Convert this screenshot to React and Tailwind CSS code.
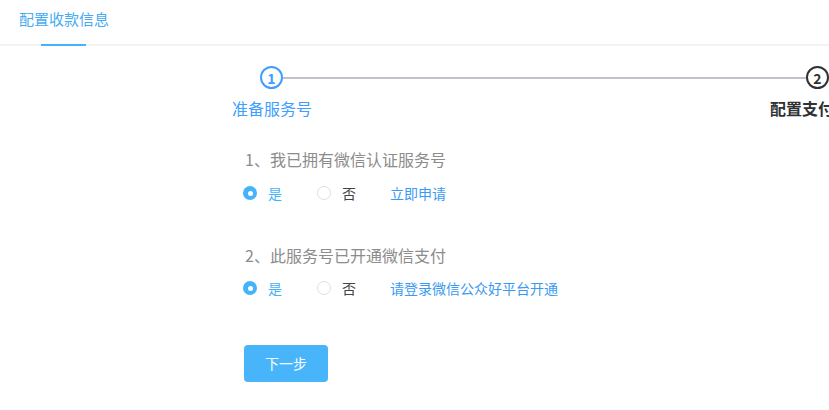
import React from "react";

const FONT = { fontFamily: '"Noto Sans CJK SC", "Noto Sans", sans-serif' };

function Radio({ checked, label, className }) {
  return (
    <div className={"flex items-center " + className}>
      {checked ? (
        <span className="flex h-[14px] w-[14px] items-center justify-center rounded-full bg-[#45b3fa]">
          <span className="h-[5px] w-[5px] rounded-full bg-white" />
        </span>
      ) : (
        <span className="h-[14px] w-[14px] rounded-full border border-[#dcdfe6] bg-white" />
      )}
      <span
        className={
          "ml-[11px] text-[14px] leading-[20px] " +
          (checked ? "text-[#45b3fa]" : "text-[#444]")
        }
      >
        {label}
      </span>
    </div>
  );
}

function Question({ title, link, first }) {
  return (
    <div className={first ? "mt-[27px]" : "mt-[40px]"}>
      <div className="ml-[2px] text-[16px] leading-[24px] text-[#8c8c8c]">{title}</div>
      <div className={"flex items-center " + (first ? "mt-[12px]" : "mt-[11px]")}>
        <Radio checked label="是" className="w-[74px]" />
        <Radio label="否" className="w-[73px]" />
        <span className="text-[14px] leading-[20px] text-[#3a9af2]">{link}</span>
      </div>
    </div>
  );
}

export default function App() {
  return (
    <div className="h-[410px] w-[829px] overflow-hidden bg-white" style={FONT}>
      <div className="relative h-[46px] border-b-2 border-[#f3f3f5]">
        <div className="pl-[19px] pt-[9px] text-[15px] leading-[20px] text-[#45acf3]">配置收款信息</div>
        <div className="absolute bottom-[-2px] left-[41px] h-[2px] w-[45px] bg-[#45b3fa]" />
      </div>

      <div className="mt-[20px] flex items-center pl-[260px]">
        <div className="flex h-[23px] w-[23px] shrink-0 items-center justify-center rounded-full border-2 border-[#409eff] text-[14px] font-bold leading-none text-[#409eff]">
          1
        </div>
        <div className="h-[2px] w-[523px] shrink-0 bg-[#c0c2cc]" />
        <div className="flex h-[23px] w-[23px] shrink-0 items-center justify-center rounded-full border-2 border-[#303133] text-[14px] font-bold leading-none text-[#303133]">
          2
        </div>
      </div>

      <div className="mt-[7px] flex whitespace-nowrap pl-[232px] text-[16px] leading-[24px]">
        <div className="w-[80px] text-center text-[#409eff]">准备服务号</div>
        <div className="ml-[458px] font-bold text-[#303133]">配置支付信息</div>
      </div>

      <div className="ml-[243px]">
        <Question first title="1、我已拥有微信认证服务号" link="立即申请" />
        <Question title="2、此服务号已开通微信支付" link="请登录微信公众好平台开通" />
        <button className="mt-[47px] ml-[1px] h-[37px] w-[84px] rounded-[4px] bg-[#48b5fb] text-[14px] text-white">
          下一步
        </button>
      </div>
    </div>
  );
}
